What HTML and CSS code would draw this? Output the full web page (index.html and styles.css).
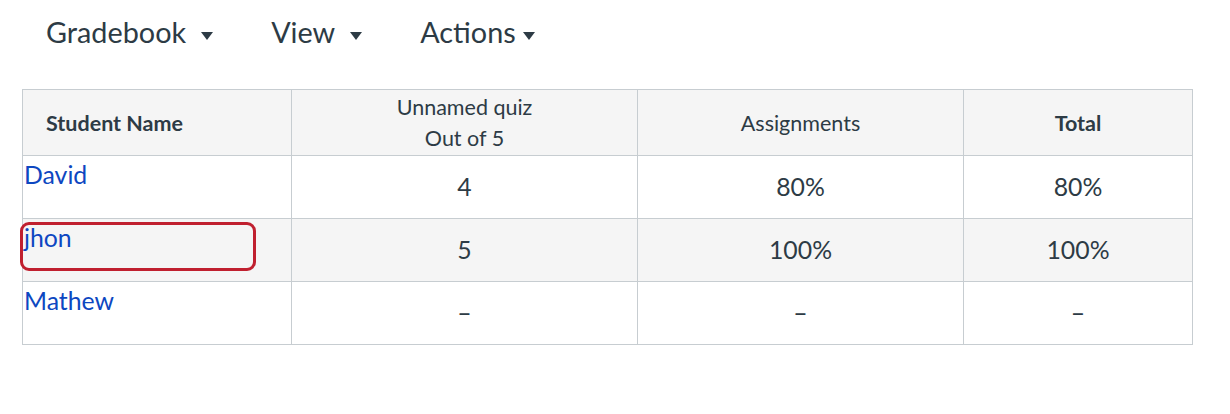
FILE: index.html
```html
<!DOCTYPE html>
<html lang="en">
<head>
<meta charset="utf-8">
<title>Gradebook</title>
<link rel="stylesheet" href="styles.css">
</head>
<body>
<nav class="menu">
  <div class="menu-item">Gradebook<svg class="caret" width="12" height="8" viewBox="0 0 12 8"><path d="M0 0h12L6 8z" fill="#2d3b45"/></svg></div>
  <div class="menu-item">View<svg class="caret" width="12" height="8" viewBox="0 0 12 8"><path d="M0 0h12L6 8z" fill="#2d3b45"/></svg></div>
  <div class="menu-item menu-item--tight">Actions<svg class="caret" width="12" height="8" viewBox="0 0 12 8"><path d="M0 0h12L6 8z" fill="#2d3b45"/></svg></div>
</nav>
<div class="grades">
  <table class="grade-table">
    <thead>
      <tr>
        <th class="col-name">Student Name</th>
        <th class="col-quiz"><div>Unnamed quiz</div><div>Out of 5</div></th>
        <th class="col-assign">Assignments</th>
        <th class="col-total">Total</th>
      </tr>
    </thead>
    <tbody>
      <tr>
        <td class="name"><a href="#">David</a></td>
        <td>4</td>
        <td>80%</td>
        <td>80%</td>
      </tr>
      <tr class="alt">
        <td class="name"><a href="#">jhon</a></td>
        <td>5</td>
        <td>100%</td>
        <td>100%</td>
      </tr>
      <tr>
        <td class="name"><a href="#">Mathew</a></td>
        <td>–</td>
        <td>–</td>
        <td>–</td>
      </tr>
    </tbody>
  </table>
  <div class="highlight"></div>
</div>
</body>
</html>
```
FILE: styles.css
```css
* { box-sizing: border-box; }
body {
  margin: 0;
  background: #fff;
  font-family: Lato, "Open Sans", sans-serif;
  color: #2d3b45;
}
.menu {
  display: flex;
  padding: 15px 0 0 46px;
  height: 89px;
  align-items: flex-start;
}
.menu-item {
  display: flex;
  align-items: center;
  font-size: 28.8px;
  line-height: 34px;
  margin-right: 58px;
}
.caret {
  margin-left: 15px;
  margin-top: 7px;
}
.menu-item--tight .caret { margin-left: 7px; }

.grades {
  position: relative;
  margin-left: 22px;
  width: 1170px;
}
.grade-table {
  border-collapse: collapse;
  width: 1170px;
  table-layout: fixed;
}
.grade-table th,
.grade-table td {
  border: 1px solid #c7cdd1;
  padding: 0;
  text-align: center;
  vertical-align: middle;
}
.grade-table th {
  background: #f5f5f5;
  font-size: 21.5px;
  font-weight: 400;
  line-height: 31px;
  height: 66px;
  padding-top: 1px;
}
.grade-table th.col-name,
.grade-table th.col-total { font-weight: 700; }
.grade-table th.col-name { text-align: left; padding-left: 23px; }
.col-name { width: 269px; }
.col-quiz { width: 346px; }
.col-assign { width: 326px; }
.col-total { width: 229px; }
.grade-table td {
  font-size: 24.8px;
  line-height: 30px;
  height: 63px;
}
.grade-table tr.alt td { background: #f5f5f5; }
.grade-table td.name {
  text-align: left;
  vertical-align: top;
  padding: 4px 0 0 1px;
}
.name a {
  color: #0d47c1;
  text-decoration: none;
}
.highlight {
  position: absolute;
  left: -2px;
  top: 133px;
  width: 236px;
  height: 49px;
  border: 3px solid #c0202f;
  border-radius: 9px;
  pointer-events: none;
}
```
